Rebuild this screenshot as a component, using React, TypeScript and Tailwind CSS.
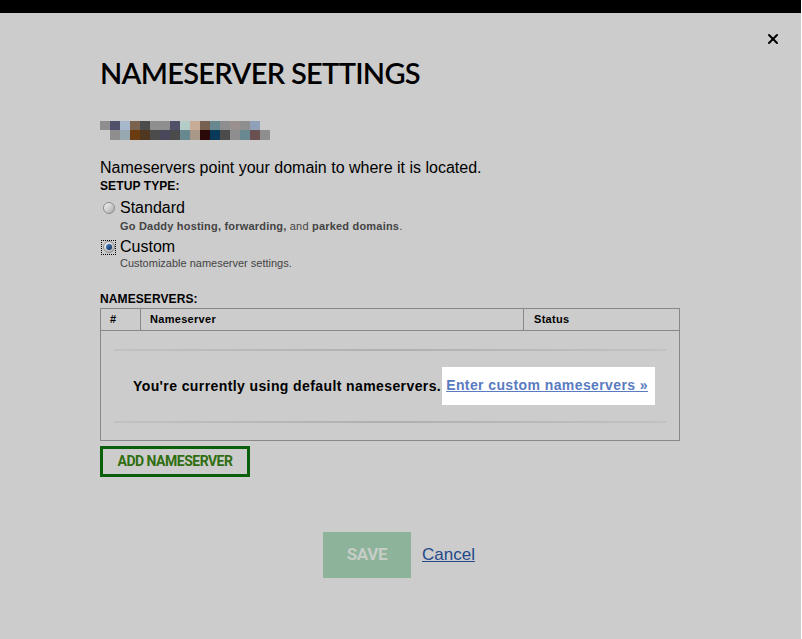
import { X } from "lucide-react";

const pixelRows = [
  ["#8e8e8e", "#50506a", "#a8b8cc", "#7a6450", "#4b4b4b", "#8e8e8e", "#8e8e8e", "#505068", "#b4ccc8", "#c8ac98", "#786050", "#688890", "#8e8e8e", "#9a9090", "#8e8e8e", "#90a0b8"],
  ["#8e8e8e", "#98a8b0", "#6a3c10", "#503820", "#4b4b4b", "#48485a", "#4b4b4b", "#688890", "#a89888", "#2a0808", "#0a3a5a", "#4b4b4b", "#8e8e8e", "#6a8890", "#6a5050", "#8e8e8e"],
];

const Radio = ({ checked }: { checked?: boolean }) => (
  <span className={`flex h-[15px] w-[15px] items-center justify-center ${checked ? "outline-1 -outline-offset-1 outline-dotted outline-black" : ""}`}>
    <span className="flex h-[12px] w-[12px] items-center justify-center rounded-full border border-[#8a8a8a] bg-gradient-to-br from-[#f4f4f4] via-[#d0d0d0] to-[#a8a8a8]">
      {checked && <span className="h-[6px] w-[6px] rounded-full bg-gradient-to-br from-[#4a8ad0] to-[#0a2a55]" />}
    </span>
  </span>
);

const Divider = () => (
  <div className="h-[2px] bg-gradient-to-r from-[#c2c2c2] via-[#afafaf] to-[#c2c2c2]" />
);

export default function App() {
  return (
    <div className="flex min-h-[639px] w-[802px] bg-white font-['Liberation_Sans',Arial,sans-serif] text-black">
      <div className="flex w-[801px] flex-col bg-[#cccccc]">
        <div className="h-[13px] bg-black" />

        <div className="relative flex flex-col pl-[100px]">
          <button className="absolute right-[20px] top-[18px] text-black">
            <X className="h-[16px] w-[16px]" strokeWidth={3} />
          </button>

          <h1 className="mt-[45px] font-['Lato',sans-serif] text-[29px] font-semibold leading-[29px] tracking-[-0.7px]">
            NAMESERVER SETTINGS
          </h1>

          {/* blurred domain */}
          <div className="mt-[34px] flex flex-col">
            <div className="flex">
              {pixelRows[0].map((c, i) => (
                <span key={i} className="h-[9px] w-[10px]" style={{ backgroundColor: c }} />
              ))}
            </div>
            <div className="ml-[10px] flex">
              {pixelRows[1].map((c, i) => (
                <span key={i} className="h-[10px] w-[10px]" style={{ backgroundColor: c }} />
              ))}
            </div>
          </div>

          <p className="mt-[19px] text-[16px] leading-[18px]">Nameservers point your domain to where it is located.</p>
          <div className="mt-[2px] text-[12px] font-bold leading-[14px] tracking-[0.1px]">SETUP TYPE:</div>

          <div className="mt-[6px] flex flex-col">
            <label className="ml-[1px] flex items-center gap-[4px]">
              <Radio />
              <span className="text-[16px] leading-[18px]">Standard</span>
            </label>
            <div className="ml-[20px] mt-[2px] text-[11px] leading-[14px] tracking-[0.2px] text-[#444]">
              <b>Go Daddy hosting, forwarding,</b> and <b>parked domains</b>.
            </div>
          </div>

          <div className="mt-[5px] flex flex-col">
            <label className="ml-[1px] flex items-center gap-[4px]">
              <Radio checked />
              <span className="text-[16px] leading-[18px]">Custom</span>
            </label>
            <div className="ml-[20px] text-[11px] leading-[14px] text-[#444]">Customizable nameserver settings.</div>
          </div>

          <div className="mt-[22px] text-[12px] font-bold leading-[14px] tracking-[0.1px]">NAMESERVERS:</div>

          <div className="mt-[2px] w-[580px] border border-[#888]">
            <div className="flex h-[22px] items-center border-b border-[#888] text-[11px] font-bold tracking-[0.3px]">
              <div className="flex h-full w-[40px] items-center border-r border-[#888] pl-[9px]">#</div>
              <div className="flex h-full w-[383px] items-center border-r border-[#888] pl-[9px]">Nameserver</div>
              <div className="flex h-full flex-1 items-center pl-[10px]">Status</div>
            </div>
            <div className="flex flex-col px-[13px] pb-[17px] pt-[18px]">
              <Divider />
              <div className="flex h-[70px] items-center justify-center pl-[8px] text-[14px] font-bold tracking-[0.4px]">
                <span>You're currently using default nameservers.</span>
                <span className="ml-[1px] bg-white pb-[9px] pl-[4px] pr-[7px] pt-[8px]">
                  <a href="#" className="text-[#5a7bbf] underline">Enter custom nameservers »</a>
                </span>
              </div>
              <Divider />
            </div>
          </div>

          <button className="mt-[5px] h-[31px] w-[150px] border-[3px] border-[#0a5f0a] font-['Roboto',sans-serif] text-[14px] font-bold tracking-[-0.5px] text-[#2f6e10]">
            ADD NAMESERVER
          </button>

          <div className="mt-[55px] flex items-center pl-[223px]">
            <button className="h-[46px] w-[88px] bg-[#8db39a] font-['Roboto',sans-serif] text-[17px] font-bold tracking-[-0.3px] text-[#c6cdc6]">
              SAVE
            </button>
            <a href="#" className="ml-[11px] text-[17px] text-[#23498a] underline">Cancel</a>
          </div>
        </div>
      </div>
    </div>
  );
}
